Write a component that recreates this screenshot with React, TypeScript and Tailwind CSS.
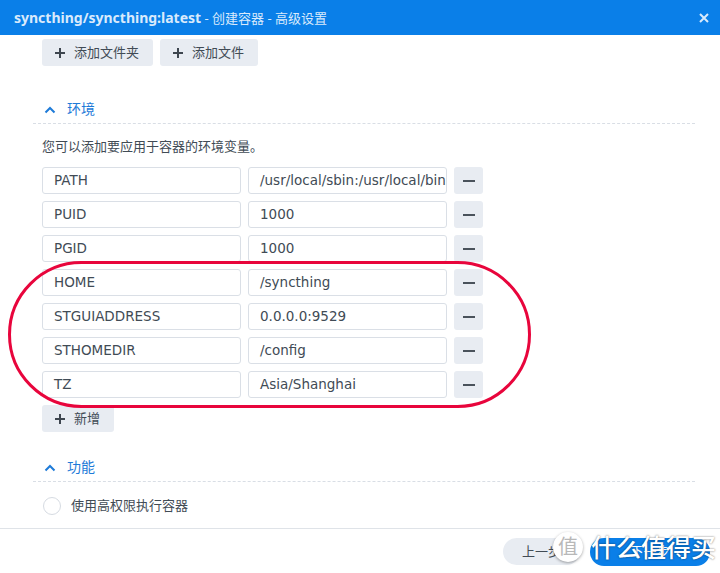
import React from 'react';

const envRows = [
  ['PATH', '/usr/local/sbin:/usr/local/bin:/usr/sbin:/usr/bin:/sbin:/bin'],
  ['PUID', '1000'],
  ['PGID', '1000'],
  ['HOME', '/syncthing'],
  ['STGUIADDRESS', '0.0.0.0:9529'],
  ['STHOMEDIR', '/config'],
  ['TZ', 'Asia/Shanghai'],
];

const font = { fontFamily: '"Noto Sans", "Noto Sans CJK SC", sans-serif' };

function Plus() {
  return (
    <svg width="12" height="12" viewBox="0 0 12 12" className="shrink-0">
      <path d="M6 1v10M1 6h10" stroke="#3e464f" strokeWidth="2" />
    </svg>
  );
}

function GrayButton({ label }: { label: string }) {
  return (
    <button className="flex h-[27px] items-center gap-[8px] rounded-[3px] bg-[#e8ecf2] pl-[12px] pr-[14px] text-[13px] text-[#414b55]">
      <Plus />
      <span>{label}</span>
    </button>
  );
}

function SectionHeader({ title }: { title: string }) {
  return (
    <div className="flex h-[25px] w-[662px] items-start gap-[11px] border-b border-dashed border-[#d9dee5] pl-[11px]">
      <svg width="12" height="20" viewBox="0 0 12 20" className="shrink-0">
        <path d="M1.5 13.5L6 9l4.5 4.5" fill="none" stroke="#1e7bd8" strokeWidth="2" />
      </svg>
      <span className="text-[14px] leading-[20px] text-[#1e7bd8]">{title}</span>
    </div>
  );
}

function Field({ value }: { value: string }) {
  return (
    <div className="flex h-[27px] w-[199px] items-center overflow-hidden whitespace-nowrap rounded-[3px] border border-[#dadfe6] bg-white px-[11px] font-['DejaVu_Sans',sans-serif] text-[13.5px] text-[#414b55]">
      {value}
    </div>
  );
}

export default function App() {
  return (
    <div className="relative flex h-[573px] w-[720px] flex-col overflow-hidden bg-white" style={font}>
      <div className="flex h-[35px] shrink-0 items-center justify-between bg-[#0a7fe8] pl-[14px] pr-[10px] text-[13px] text-[#d9eafc]">
        <div>
          <span className="text-[14px] font-bold">syncthing/syncthing:latest</span>
          <span> - 创建容器 - 高级设置</span>
        </div>
        <svg width="12" height="12" viewBox="0 0 12 12">
          <path d="M2 2l8 8M10 2l-8 8" stroke="#d9eafc" strokeWidth="2" />
        </svg>
      </div>

      <div className="flex flex-1 flex-col pl-[33px]">
        <div className="mt-[4px] flex gap-[7px] pl-[9px]">
          <GrayButton label="添加文件夹" />
          <GrayButton label="添加文件" />
        </div>

        <div className="mt-[33px]">
          <SectionHeader title="环境" />
        </div>
        <div className="pl-[9px]">
          <div className="mt-[14px] text-[13px] leading-[16px] text-[#414b55]">您可以添加要应用于容器的环境变量。</div>
          <div className="mt-[13px] flex flex-col gap-[7px]">
            {envRows.map(([k, v]) => (
              <div key={k} className="flex gap-[7px]">
                <Field value={k} />
                <Field value={v} />
                <button className="flex h-[27px] w-[29px] items-center justify-center rounded-[3px] bg-[#e8ecf2]">
                  <span className="block h-[2px] w-[12px] bg-[#4a525b]" />
                </button>
              </div>
            ))}
          </div>
          <div className="mt-[7px]">
            <GrayButton label="新增" />
          </div>
        </div>

        <div className="mt-[25px]">
          <SectionHeader title="功能" />
        </div>
        <div className="mt-[14px] flex items-center gap-[10px] pl-[10px]">
          <span className="block h-[18px] w-[18px] rounded-full border border-[#d6dbe2] bg-white" />
          <span className="text-[13px] text-[#414b55]">使用高权限执行容器</span>
        </div>
      </div>

      <div className="flex h-[45px] shrink-0 items-start justify-end gap-[10px] border-t border-[#dfe3e8] pr-[10px] pt-[9px]">
        <button className="h-[27px] w-[77px] rounded-full bg-[#e8ecf2] text-[13px] text-[#414b55]">上一步</button>
        <button className="h-[28px] w-[120px] rounded-full bg-[#0a7fe8] text-[13px] text-white">下一步</button>
      </div>

      <div className="pointer-events-none absolute left-[8px] top-[261px] h-[147px] w-[523px] rounded-[74px] border-[3px] border-[#e8053c]" />

      <div className="pointer-events-none absolute left-[553px] top-[532px] flex items-center gap-[8px]">
        <div className="flex h-[30px] w-[30px] items-center justify-center rounded-full bg-white text-[20px] text-[#b8b8b8] shadow-[0_1px_3px_rgba(0,0,0,0.35)]">值</div>
        <span className="text-[25px] font-medium leading-[30px] text-white [text-shadow:0_0_2px_rgba(0,0,0,0.6)]">什么值得买</span>
      </div>
    </div>
  );
}
